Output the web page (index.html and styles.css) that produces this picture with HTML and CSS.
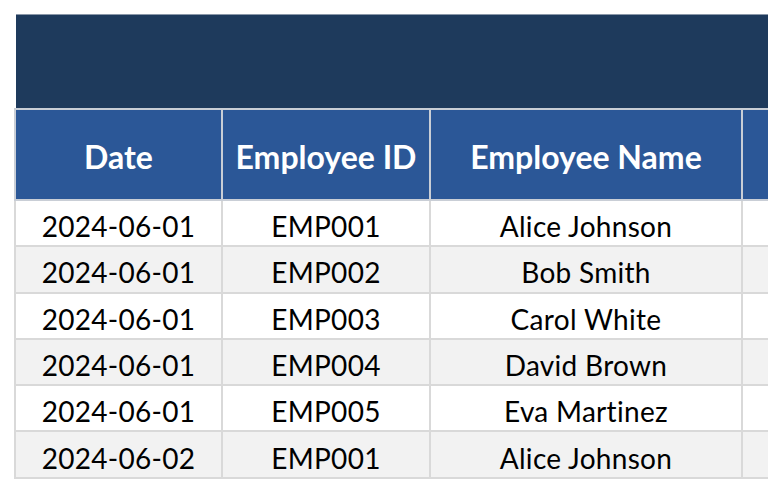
FILE: index.html
```html
<!DOCTYPE html>
<html>
<head>
<meta charset="utf-8">
<link rel="stylesheet" href="styles.css">
</head>
<body>
<div class="sheet">
  <div class="banner"></div>
  <table class="grid">
    <colgroup>
      <col class="c1"><col class="c2"><col class="c3"><col class="c4">
    </colgroup>
    <thead>
      <tr><th>Date</th><th>Employee ID</th><th>Employee Name</th><th></th></tr>
    </thead>
    <tbody>
      <tr><td>2024-06-01</td><td>EMP001</td><td>Alice Johnson</td><td></td></tr>
      <tr><td>2024-06-01</td><td>EMP002</td><td>Bob Smith</td><td></td></tr>
      <tr><td>2024-06-01</td><td>EMP003</td><td>Carol White</td><td></td></tr>
      <tr><td>2024-06-01</td><td>EMP004</td><td>David Brown</td><td></td></tr>
      <tr><td>2024-06-01</td><td>EMP005</td><td>Eva Martinez</td><td></td></tr>
      <tr><td>2024-06-02</td><td>EMP001</td><td>Alice Johnson</td><td></td></tr>
    </tbody>
  </table>
</div>
</body>
</html>
```
FILE: styles.css
```css
html, body {
  margin: 0;
  padding: 0;
  background: #ffffff;
  overflow: hidden;
}
body {
  width: 768px;
  height: 480px;
  font-family: Lato, "Open Sans", sans-serif;
}
.sheet {
  padding: 14px 0 0 14px;
}
.banner {
  height: 93px;
  margin-left: 2px;
  background: #1e3a5c;
  border-top: 1px solid #8a97a8;
}
.grid {
  border-collapse: collapse;
  table-layout: fixed;
  width: 756px;
}
.c1 { width: 207px; }
.c2 { width: 208px; }
.c3 { width: 312px; }
.c4 { width: 29px; }
.grid th, .grid td {
  border: 2px solid #d9d9d9;
  text-align: center;
  padding: 0;
  white-space: nowrap;
  overflow: hidden;
}
.grid th {
  background: #2b5797;
  color: #ffffff;
  font-weight: 700;
  font-size: 32px;
  height: 85px;
  padding-top: 4px;
  border-color: #c9ced6;
}
.grid td {
  color: #000000;
  font-size: 28px;
  height: 38.3px;
  padding-top: 6px;
  letter-spacing: 0.3px;
}
.grid tbody tr:nth-child(even) td {
  background: #f2f2f2;
}
```
